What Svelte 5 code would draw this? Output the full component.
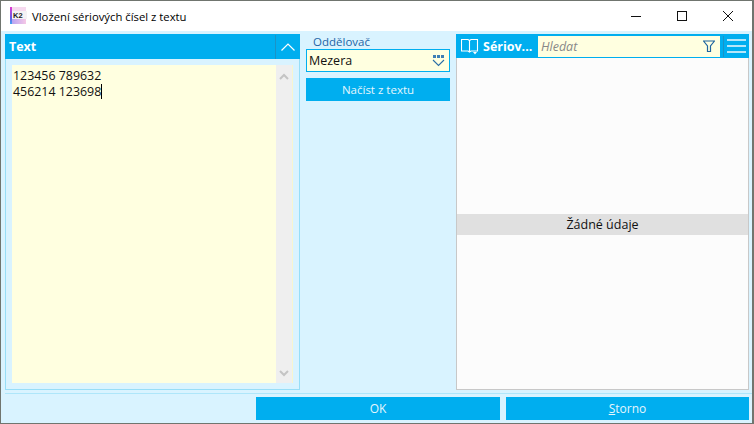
<script>
  const text = "123456 789632\n456214 123698";
</script>

<div class="window">
  <div class="titlebar">
    <svg class="logo" width="20" height="20" viewBox="0 0 20 20">
      <defs>
        <linearGradient id="lg" x1="0" y1="0" x2="0" y2="1">
          <stop offset="0" stop-color="#e23ccf" />
          <stop offset="0.6" stop-color="#6a55e6" />
          <stop offset="1" stop-color="#3fa5f0" />
        </linearGradient>
        <linearGradient id="lg2" x1="0" y1="0" x2="1" y2="0">
          <stop offset="0" stop-color="#b9a4f2" />
          <stop offset="1" stop-color="#f6c8e6" />
        </linearGradient>
      </defs>
      <rect x="0" y="1" width="2" height="17" fill="url(#lg)" />
      <rect x="2" y="1" width="14" height="4" fill="#f6d9ef" />
      <rect x="2" y="5" width="15" height="8" fill="#f4f2f4" />
      <rect x="2" y="13" width="14" height="5" fill="url(#lg2)" />
      <text x="3" y="12" class="logo-text">K2</text>
    </svg>
    <span class="title">Vložení sériových čísel z textu</span>
    <div class="controls">
      <svg width="46" height="30" viewBox="0 0 46 30"><path d="M18 15.5h10" stroke="#111" fill="none" /></svg>
      <svg width="46" height="30" viewBox="0 0 46 30"><rect x="18.5" y="10.5" width="9" height="9" stroke="#111" fill="none" /></svg>
      <svg width="46" height="30" viewBox="0 0 46 30"><path d="M18 10l10 10M28 10l-10 10" stroke="#111" fill="none" /></svg>
    </div>
  </div>

  <div class="content">
    <div class="columns">
      <section class="panel left">
        <header class="head">
          <b>Text</b>
          <span class="collapse">
            <svg width="14" height="8" viewBox="0 0 14 8"><path d="M0.5 7.5L7 1l6.5 6.5" stroke="#fff" stroke-width="1.2" fill="none" /></svg>
          </span>
        </header>
        <div class="editor">
          <div class="area">
            <div class="lines">{text}<i class="caret"></i></div>
          </div>
          <div class="scroll">
            <svg width="10" height="7" viewBox="0 0 10 7"><path d="M1 6l4-4 4 4" stroke="#c4c4c4" stroke-width="2" fill="none" /></svg>
            <svg width="10" height="7" viewBox="0 0 10 7"><path d="M1 1l4 4 4-4" stroke="#c4c4c4" stroke-width="2" fill="none" /></svg>
          </div>
        </div>
      </section>

      <section class="middle">
        <div class="label">Oddělovač</div>
        <div class="select">
          <span>Mezera</span>
          <svg width="13" height="12" viewBox="0 0 13 12">
            <path d="M1 0h3v3h-3zM5 0h3v3h-3zM9 0h3v3h-3z" fill="#3f7fb5" />
            <path d="M1 5l5.5 5.5L12 5" stroke="#2a6ea6" stroke-width="1.1" fill="none" />
          </svg>
        </div>
        <button class="btn">Načíst z textu</button>
      </section>

      <section class="panel right">
        <header class="head head-right">
          <svg class="book" width="18" height="18" viewBox="0 0 18 18">
            <path d="M0.5 2.5h6.5l1.5 1 1.5-1h6.5v11.5h-6.5l-1.5 1-1.5-1h-6.5zM8.5 3.5v11" stroke="#fff" stroke-width="1.1" fill="none" />
            <path d="M12 15h4l-2 2.5z" fill="#fff" />
          </svg>
          <b>Sériov...</b>
          <div class="search">
            <em>Hledat</em>
            <svg width="12" height="13" viewBox="0 0 12 13"><path d="M0.5 1h11l-4 5v5.5h-3V6z" stroke="#1f65a0" stroke-width="1.2" fill="none" /></svg>
          </div>
          <span class="menu"><i></i><i></i><i></i></span>
        </header>
        <div class="empty">
          <div class="nodata">Žádné údaje</div>
        </div>
      </section>
    </div>

    <footer class="footer">
      <button class="btn ok">OK</button>
      <button class="btn storno"><u>S</u>torno</button>
    </footer>
  </div>
</div>

<style>
  :global(body) {
    margin: 0;
  }

  .window {
    width: 754px;
    height: 424px;
    box-sizing: border-box;
    border: 1px solid #70756f;
    border-right-width: 2px;
    display: flex;
    flex-direction: column;
    font-family: "Open Sans", "Noto Sans", sans-serif;
    font-size: 12px;
    color: #111;
    background: #d9f3ff;
    overflow: hidden;
  }

  .titlebar {
    height: 30px;
    background: #fff;
    display: flex;
    align-items: center;
    padding-left: 9px;
    flex: none;
  }

  .logo {
    margin-right: 1px;
  }

  .logo-text {
    font-family: "Liberation Sans", sans-serif;
    font-size: 7.5px;
    font-weight: 700;
    fill: #222;
  }

  .title {
    margin-left: 1px;
    font-size: 11.3px;
    color: #000;
  }

  .controls {
    margin-left: auto;
    display: flex;
    margin-right: 1px;
  }

  .controls svg {
    display: block;
  }

  .content {
    flex: 1;
    display: flex;
    flex-direction: column;
    min-height: 0;
  }

  .columns {
    flex: 1;
    display: flex;
    padding: 3px 3px 0 4px;
    min-height: 0;
  }

  .panel {
    display: flex;
    flex-direction: column;
    box-sizing: border-box;
    height: 356px;
  }

  .left {
    width: 295px;
    border: 1px solid #97def7;
    border-top: none;
    margin-right: 5px;
  }

  .head {
    background: #00aeef;
    color: #fff;
    display: flex;
    align-items: center;
    flex: none;
    font-size: 12.5px;
  }

  .left .head {
    height: 25px;
    margin: 0 -1px;
    padding-left: 4px;
  }

  .collapse {
    margin-left: auto;
    width: 24px;
    height: 24px;
    border-left: 1px solid #1b93c6;
    display: flex;
    align-items: center;
    justify-content: center;
  }

  .editor {
    flex: 1;
    margin: 6px 6px 6px 6px;
    display: flex;
    background: #ffffe0;
    border-right: 1px solid #f8f5cf;
    min-height: 0;
  }

  .area {
    flex: 1;
    padding: 3px 1px;
  }

  .lines {
    white-space: pre-wrap;
    line-height: 16px;
    font-size: 12.4px;
  }

  .caret {
    display: inline-block;
    width: 1px;
    height: 15px;
    background: #000;
    vertical-align: -3px;
  }

  .scroll {
    width: 16px;
    background: #efefef;
    display: flex;
    flex-direction: column;
    justify-content: space-between;
    align-items: center;
    padding: 8px 0 6px;
  }

  .middle {
    width: 144px;
    margin-left: 1px;
    display: flex;
    flex-direction: column;
  }

  .label {
    color: #1d65a6;
    font-size: 11.5px;
    line-height: 15px;
    padding-left: 7px;
  }

  .select {
    height: 23px;
    box-sizing: border-box;
    border: 1px solid #00aeef;
    background: #ffffe0;
    display: flex;
    align-items: center;
    justify-content: space-between;
    padding: 0 4px 0 2px;
    font-size: 12.5px;
  }

  .btn {
    border: none;
    background: #00aeef;
    color: #e4f6fd;
    font: inherit;
    padding: 0;
    height: 23px;
  }

  .middle .btn {
    margin-top: 6px;
    font-size: 11.5px;
  }

  .right {
    width: 293px;
    margin-left: 6px;
    border: 1px solid #c8c8c8;
    border-top: none;
    background: #fcfcfc;
  }

  .head-right {
    height: 24px;
    margin: 0 -1px;
    padding: 0 1px 0 5px;
  }

  .book {
    margin-right: 4px;
  }

  .head-right b {
    width: 54px;
    white-space: nowrap;
  }

  .search {
    width: 182px;
    height: 21px;
    margin-left: 1px;
    background: #ffffe0;
    display: flex;
    align-items: center;
    justify-content: space-between;
    padding: 0 5px 0 3px;
    box-sizing: border-box;
  }

  .search em {
    color: #888;
  }

  .menu {
    margin-left: 3px;
    border-left: 1px solid #1b93c6;
    padding-left: 3px;
    height: 21px;
    display: flex;
    flex-direction: column;
    justify-content: center;
    gap: 4px;
  }

  .menu i {
    display: block;
    width: 19px;
    height: 2px;
    background: #b5e6f9;
  }

  .empty {
    flex: 1;
    display: flex;
    align-items: center;
    padding-top: 2px;
  }

  .nodata {
    flex: 1;
    height: 21px;
    background: #e0e0e0;
    line-height: 21px;
    text-align: center;
    font-size: 12.5px;
  }

  .footer {
    flex: none;
    height: 30px;
    margin-left: 4px;
    border-top: 1px solid #aee6fa;
    margin-top: 2px;
    box-sizing: border-box;
    display: flex;
    justify-content: flex-end;
    gap: 6px;
    padding: 3px 3px 0 0;
  }

  .ok {
    width: 244px;
  }

  .storno {
    width: 243px;
  }
</style>
